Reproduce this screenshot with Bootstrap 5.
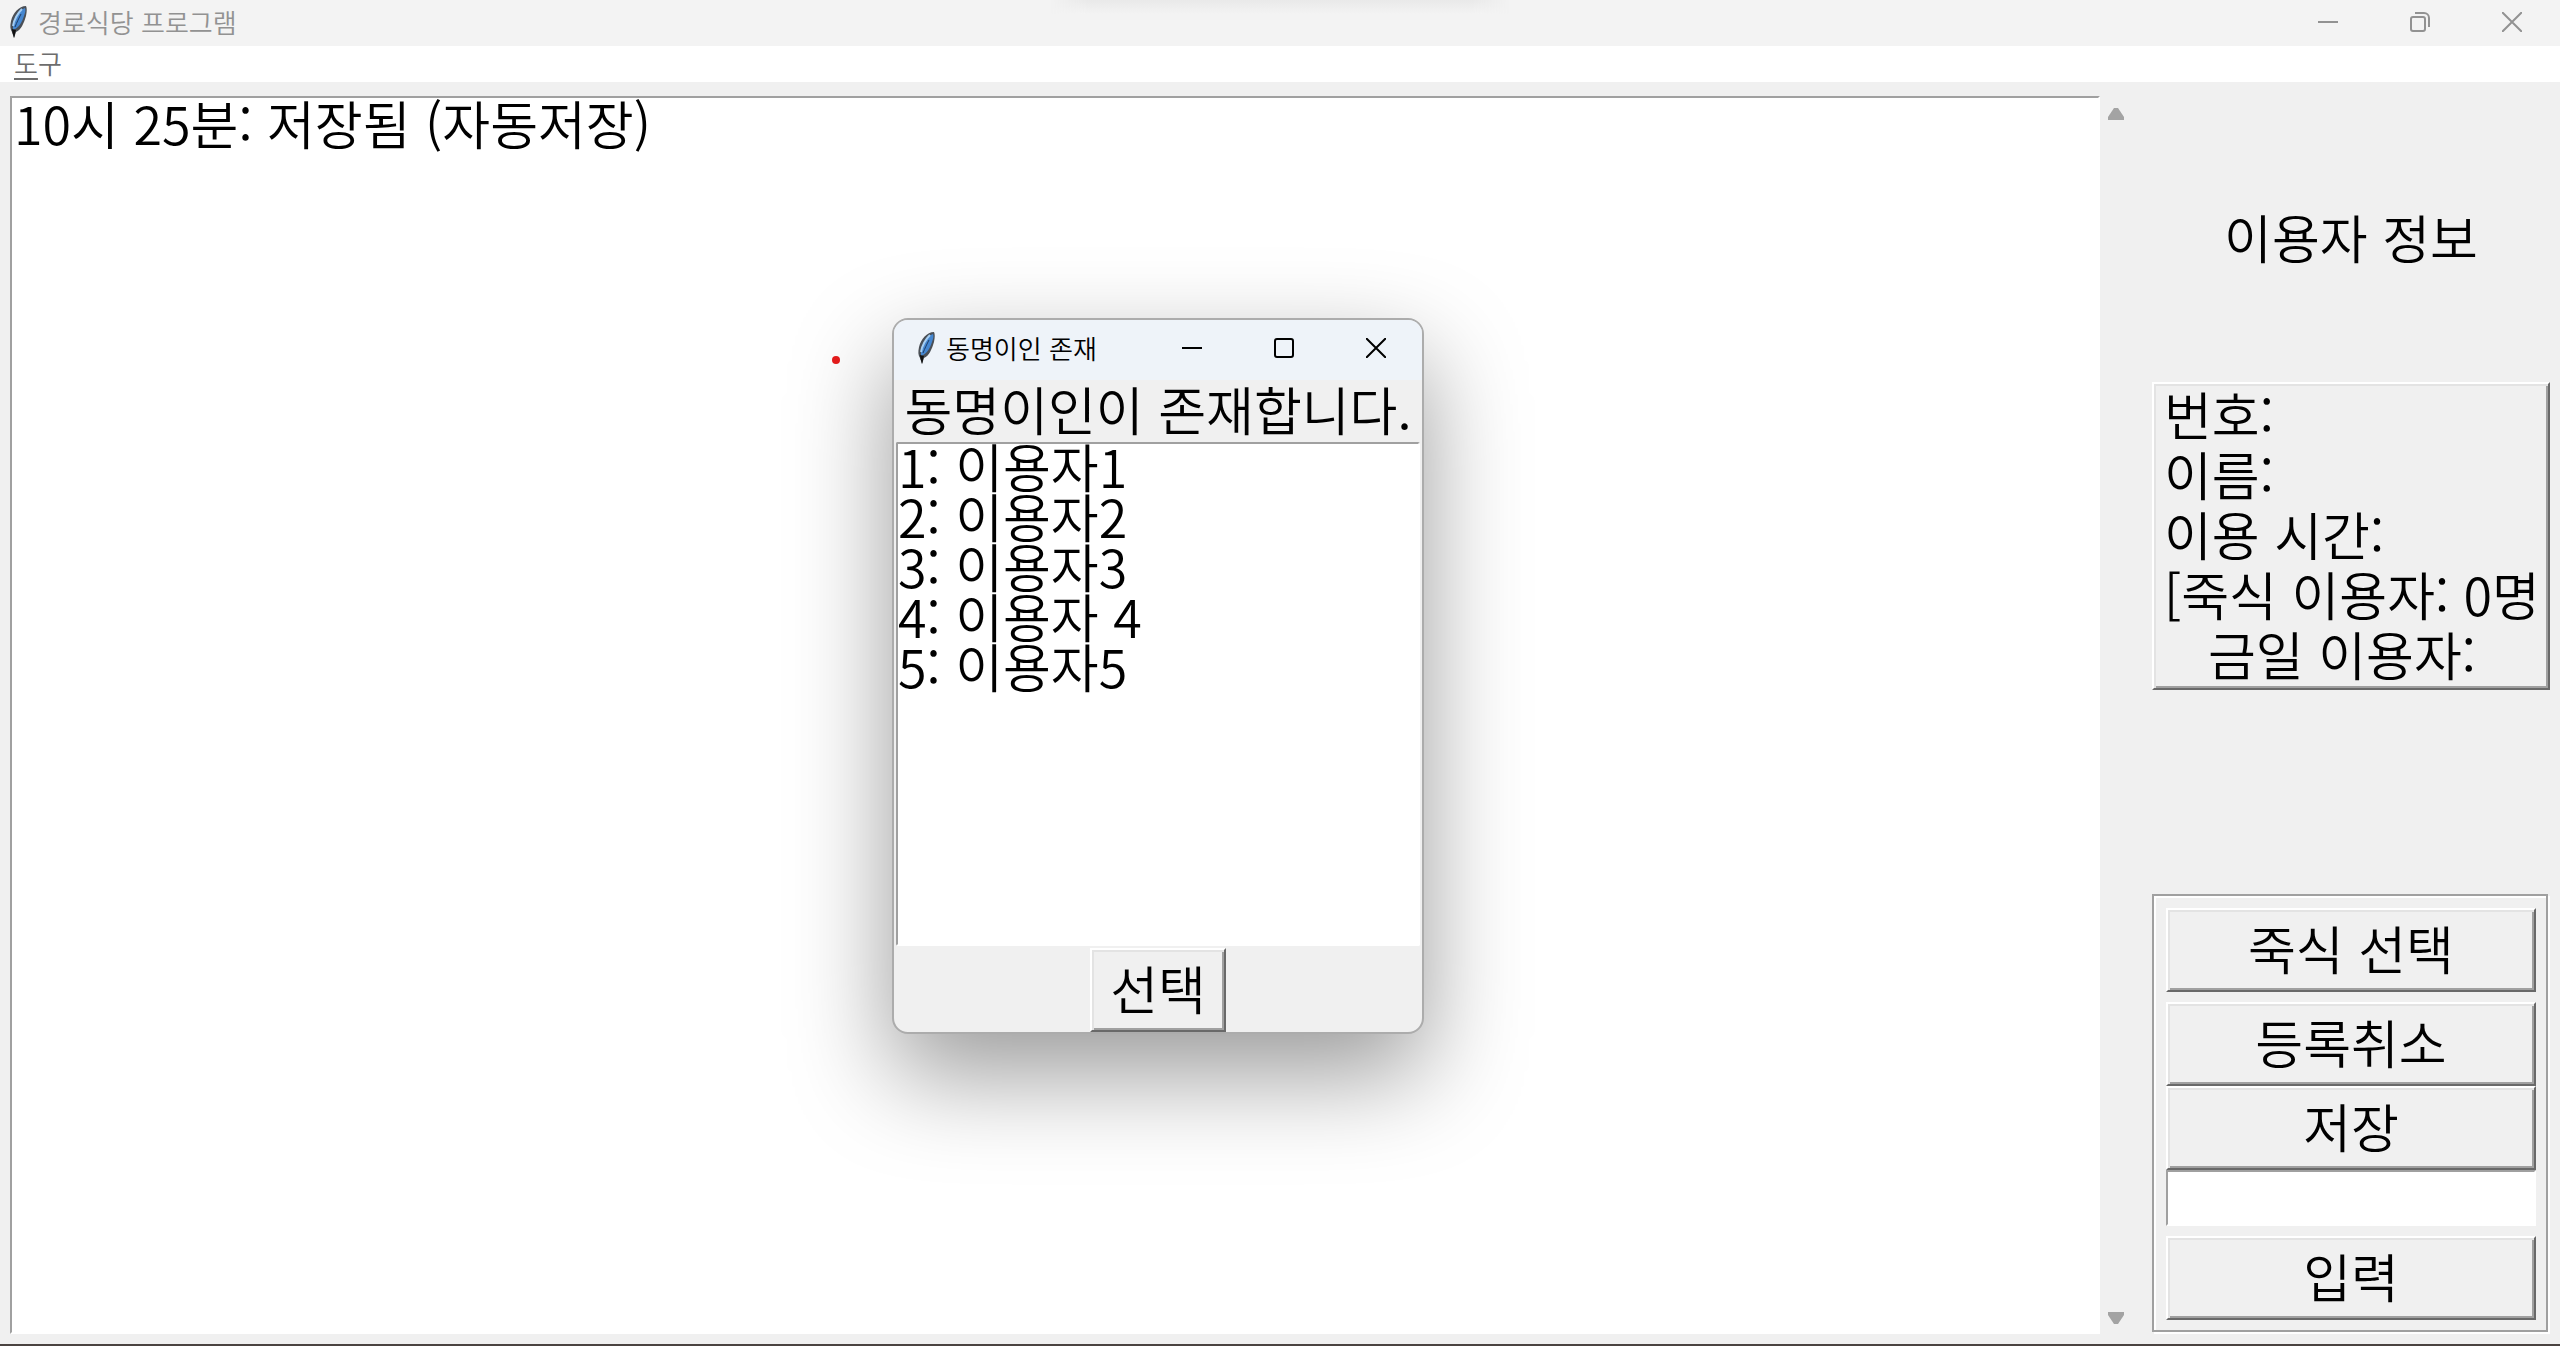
<!DOCTYPE html>
<html lang="ko">
<head>
<meta charset="utf-8">
<meta name="viewport" content="width=device-width, initial-scale=1">
<title>경로식당 프로그램</title>
<link rel="stylesheet" href="https://cdn.jsdelivr.net/npm/bootstrap@5.3.0/dist/css/bootstrap.min.css">
<style>
  :root { --face: #f0f0f0; --shade: #a0a0a0; --dark: #696969; --lite: #e3e3e3; }
  body { font-family: "Noto Sans CJK KR", sans-serif; font-weight: 350; font-size: 52px; line-height: 60px; color: #000; background: var(--face); }
  .app-window { border-bottom: 2px solid #4a4340; }
  .title-strip { height: 46px; background: #f3f3f3; color: #929292; font-size: 26px; line-height: 26px; padding: 0 2px 2px 8px; }
  .top-glow { left: 41%; width: 18%; top: 0; height: 14px; background: linear-gradient(#e9e9e9, #f3f3f3); -webkit-mask-image: linear-gradient(90deg, transparent, #000 8%, #000 92%, transparent); mask-image: linear-gradient(90deg, transparent, #000 8%, #000 92%, transparent); }
  .title-text { gap: 10px; }
  .feather { width: 20px; height: 34px; flex: none; }
  .sys-btn { border: 0; background: none; color: inherit; width: 92px; padding: 0; display: flex; align-items: center; justify-content: center; }
  .sys-btn svg { width: 20px; height: 20px; fill: none; stroke: currentColor; stroke-width: 2; }
  .menu-strip { height: 36px; background: #fff; font-size: 26px; line-height: 34px; padding: 0 14px; }
  .menu-strip a { color: #6d6d6d; text-decoration: none; }
  .menu-strip u { text-underline-offset: 4px; text-decoration-thickness: 2px; }
  .work { padding: 14px 10px 10px; }
  .log-box { resize: none; overflow: hidden; background: #fff; border: 2px solid #fff; border-top-color: var(--shade); border-left-color: var(--shade); padding: 0 2px; line-height: 50px; outline: 0; color: #000; font-weight: inherit; }
  .scroll-strip { width: 52px; padding: 12px 8px 10px; }
  .scroll-strip button { border: 0; padding: 0; background: none; width: 16px; height: 12px; display: block; }
  .scroll-strip svg { display: block; width: 16px; height: 12px; fill: #a3a3a3; }
  .side-col { width: 398px; }
  .side-title { flex: 284 0 0; padding-bottom: 4px; }
  .side-gap { flex: 206 0 0; }
  .raised { background: var(--face); border: 2px solid; border-color: #fff var(--dark) var(--dark) #fff; box-shadow: inset 2px 2px 0 var(--lite), inset -2px -2px 0 var(--shade); color: #000; }
  .info-frame { padding: 0 6px 4px 10px; white-space: nowrap; }
  .info-frame .indent { padding-left: 44px; }
  .groove { border: 2px solid var(--shade); box-shadow: inset 2px 2px 0 #fff, 2px 2px 0 #fff; padding: 12px 10px 10px 12px; margin: 0 2px 2px 0; }
  .tk-btn { height: 84px; padding: 0 0 4px; font-weight: inherit; line-height: 74px; }
  .entry-box { height: 56px; border: 2px solid #fff; border-top-color: var(--shade); border-left-color: var(--shade); background: #fff; outline: 0; font-size: 36px; padding: 0 4px; }
  .btn-gap { margin-bottom: 10px; }
  .dup-dialog { position: absolute; left: 892px; top: 318px; width: 532px; border: 2px solid #acacac; border-radius: 16px; background: var(--face); overflow: hidden; box-shadow: 0 40px 100px rgba(0,0,0,.4); }
  .dup-title { height: 60px; background: #eef3f9; font-size: 26px; line-height: 26px; padding: 0 0 4px 22px; }
  .dup-msg { height: 62px; line-height: 58px; white-space: nowrap; }
  .dup-list { display: block; height: 504px; margin: 0 2px; overflow: hidden; border: 2px solid #fff; border-top-color: var(--shade); border-left-color: var(--shade); background: #fff; padding: 0; outline: 0; font-weight: inherit; color: #000; }
  .dup-list option { display: flex; align-items: center; height: 50px; min-height: 0; line-height: 42px; padding: 0 0 8px; font-weight: inherit; overflow: visible; }
  .dup-foot { padding-top: 2px; }
  .pick-btn { width: 136px; }
  .red-dot { position: absolute; left: 832px; top: 356px; width: 8px; height: 8px; border-radius: 50%; background: #e81c1c; }
</style>
</head>
<body>
<svg class="d-none" xmlns="http://www.w3.org/2000/svg">
  <symbol id="feather" viewBox="0 0 20 34">
    <path d="M18 1C11 1 5 8 3 16c-1 5-1 8 1 11l2 6 2-6c5-2 8-9 10-16 1-5 1-8 0-10z" fill="#4a4f56"/>
    <path d="M17 3C11 5 7 12 5 19l0 6c6-2 9-8 11-14 1-3 2-6 1-8z" fill="#4486d0"/>
    <path d="M14 4C10 8 6 15 5 21" fill="none" stroke="#a4cdf2" stroke-width="2"/>
    <path d="M13 9C11 13 9 17 7 22" fill="none" stroke="#1d3c66" stroke-width="1"/>
    <path d="M4 24c0 3 1 5 2 9 1-3 1-5 2-8z" fill="#111"/>
  </symbol>
</svg>

<div class="app-window d-flex flex-column min-vh-100">
  <header class="title-strip position-relative d-flex justify-content-between">
    <div class="top-glow position-absolute"></div>
    <div class="title-text d-flex align-items-center">
      <svg class="feather" aria-hidden="true"><use href="#feather"/></svg>
      <span>경로식당 프로그램</span>
    </div>
    <div class="d-flex">
      <button class="sys-btn" type="button" aria-label="최소화"><svg viewBox="0 0 20 20"><path d="M0 10h20"/></svg></button>
      <button class="sys-btn" type="button" aria-label="이전 크기로"><svg viewBox="0 0 20 20"><rect x="1" y="5" width="14" height="14" rx="2"/><path d="M5 1h9a5 5 0 0 1 5 5v9"/></svg></button>
      <button class="sys-btn" type="button" aria-label="닫기"><svg viewBox="0 0 20 20"><path d="M0 0l20 20M20 0L0 20"/></svg></button>
    </div>
  </header>

  <nav class="menu-strip"><a href="#"><u>도</u>구</a></nav>

  <main class="work d-flex flex-grow-1">
    <textarea class="log-box flex-grow-1" aria-label="기록" spellcheck="false">10시 25분: 저장됨 (자동저장)</textarea>
    <div class="scroll-strip d-flex flex-column justify-content-between">
      <button type="button" aria-label="위로"><svg viewBox="0 0 16 12"><path d="M6 0h4l6 9v3H0V9z"/></svg></button>
      <button type="button" aria-label="아래로"><svg viewBox="0 0 16 12"><path d="M6 12h4l6-9V0H0v3z"/></svg></button>
    </div>
    <aside class="side-col d-flex flex-column">
      <div class="side-title d-flex align-items-center justify-content-center">이용자 정보</div>
      <section class="raised info-frame">
        <div>번호:</div>
        <div>이름:</div>
        <div>이용 시간:</div>
        <div>[죽식 이용자: 0명</div>
        <div class="indent">금일 이용자:</div>
      </section>
      <div class="side-gap"></div>
      <form class="groove d-flex flex-column">
        <button class="raised tk-btn btn-gap" type="button">죽식 선택</button>
        <button class="raised tk-btn" type="button">등록취소</button>
        <button class="raised tk-btn" type="button">저장</button>
        <input class="entry-box btn-gap w-100" type="text" aria-label="이용자 입력">
        <button class="raised tk-btn" type="button">입력</button>
      </form>
    </aside>
  </main>
</div>

<div class="red-dot"></div>

<div class="dup-dialog" role="dialog" aria-labelledby="dup-name">
  <div class="dup-title d-flex justify-content-between">
    <div class="title-text d-flex align-items-center">
      <svg class="feather" aria-hidden="true"><use href="#feather"/></svg>
      <span id="dup-name">동명이인 존재</span>
    </div>
    <div class="d-flex">
      <button class="sys-btn" type="button" aria-label="최소화"><svg viewBox="0 0 20 20"><path d="M0 10h20"/></svg></button>
      <button class="sys-btn" type="button" aria-label="최대화"><svg viewBox="0 0 20 20"><rect x="1" y="1" width="18" height="18" rx="2"/></svg></button>
      <button class="sys-btn" type="button" aria-label="닫기"><svg viewBox="0 0 20 20"><path d="M0 0l20 20M20 0L0 20"/></svg></button>
    </div>
  </div>
  <label class="dup-msg d-flex justify-content-center" for="dup-users">동명이인이 존재합니다.</label>
  <div class="d-flex flex-column">
    <select class="dup-list" id="dup-users" size="10">
      <option>1: 이용자1</option>
      <option>2: 이용자2</option>
      <option>3: 이용자3</option>
      <option>4: 이용자 4</option>
      <option>5: 이용자5</option>
    </select>
  </div>
  <div class="dup-foot d-flex justify-content-center">
    <button class="raised tk-btn pick-btn" type="button">선택</button>
  </div>
</div>
<script src="https://cdn.jsdelivr.net/npm/bootstrap@5.3.0/dist/js/bootstrap.bundle.min.js"></script>
</body>
</html>
